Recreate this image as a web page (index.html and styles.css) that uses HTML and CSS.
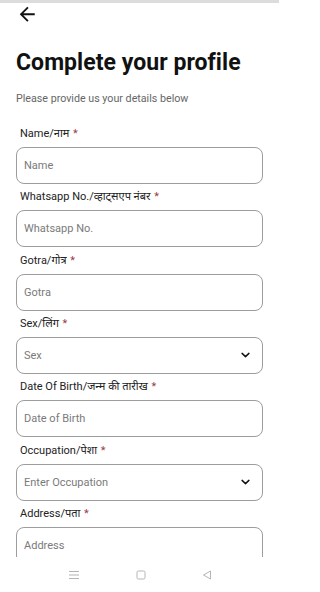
FILE: index.html
```html
<!DOCTYPE html>
<html lang="en">
<head>
<meta charset="utf-8">
<meta name="viewport" content="width=279">
<title>Complete your profile</title>
<link rel="stylesheet" href="styles.css">
</head>
<body>
<div class="statusbar"></div>
<header class="topbar">
  <svg class="back" viewBox="0 0 24 24" width="22.5" height="22.5" aria-hidden="true"><path d="M20 11H7.83l5.59-5.59L12 4l-8 8 8 8 1.41-1.41L7.83 13H20v-2z" fill="#111"/></svg>
</header>
<main class="content">
  <h1 class="title">Complete your profile</h1>
  <p class="subtitle">Please provide us your details below</p>
  <form class="form">
    <div class="field">
      <label class="label">Name/नाम <span class="req">*</span></label>
      <input class="input" type="text" placeholder="Name">
    </div>
    <div class="field">
      <label class="label">Whatsapp No./व्हाट्सएप नंबर <span class="req">*</span></label>
      <input class="input" type="text" placeholder="Whatsapp No.">
    </div>
    <div class="field">
      <label class="label">Gotra/गोत्र <span class="req">*</span></label>
      <input class="input" type="text" placeholder="Gotra">
    </div>
    <div class="field">
      <label class="label">Sex/लिंग <span class="req">*</span></label>
      <div class="input select"><span class="ph">Sex</span>
        <svg class="chev" viewBox="0 0 10 6" width="9" height="6" aria-hidden="true"><polyline points="1.2,1.2 5,4.8 8.8,1.2" fill="none" stroke="#111" stroke-width="1.6" stroke-linecap="round" stroke-linejoin="round"/></svg>
      </div>
    </div>
    <div class="field">
      <label class="label">Date Of Birth/जन्म की तारीख <span class="req">*</span></label>
      <input class="input" type="text" placeholder="Date of Birth">
    </div>
    <div class="field">
      <label class="label">Occupation/पेशा <span class="req">*</span></label>
      <div class="input select"><span class="ph">Enter Occupation</span>
        <svg class="chev" viewBox="0 0 10 6" width="9" height="6" aria-hidden="true"><polyline points="1.2,1.2 5,4.8 8.8,1.2" fill="none" stroke="#111" stroke-width="1.6" stroke-linecap="round" stroke-linejoin="round"/></svg>
      </div>
    </div>
    <div class="field">
      <label class="label">Address/पता <span class="req">*</span></label>
      <textarea class="input area" placeholder="Address"></textarea>
    </div>
  </form>
</main>
<nav class="navbar">
  <svg viewBox="0 0 12 10" width="12" height="10" aria-hidden="true"><path d="M1 1.5h10M1 5h10M1 8.5h10" stroke="#b5b5b5" stroke-width="1" fill="none"/></svg>
  <svg viewBox="0 0 10 10" width="10" height="10" aria-hidden="true"><rect x="1" y="1" width="8" height="8" rx="1.5" stroke="#b5b5b5" stroke-width="1" fill="none"/></svg>
  <svg viewBox="0 0 10 10" width="10" height="10" aria-hidden="true"><path d="M8.5 1L1.5 5l7 4z" stroke="#b5b5b5" stroke-width="1" fill="none" stroke-linejoin="round"/></svg>
</nav>
</body>
</html>
```
FILE: styles.css
```css
* { box-sizing: border-box; }
html, body {
  margin: 0;
  padding: 0;
  background: #fff;
  font-family: Roboto, "Noto Sans", "Noto Sans Devanagari", sans-serif;
  color: #1a1a1a;
}
html { width: 279px; }
body { width: 279px; height: 592px; overflow: hidden; }
.statusbar { height: 3px; background: #dcdcdc; }
.topbar { height: 22px; padding-left: 16px; display: flex; align-items: flex-start; }
.back { display: block; margin-top: 0; }
.content { padding: 0 16px; }
.title {
  margin: 24px 0 0;
  font-size: 23px;
  line-height: 28px;
  font-weight: 700;
  color: #111;
  letter-spacing: 0.05px;
}
.subtitle {
  margin: 15px 0 0;
  font-size: 10.7px;
  line-height: 13px;
  color: #666;
}
.form {
  margin-top: 22px;
  display: flex;
  flex-direction: column;
  gap: 6.33px;
}
.field { display: flex; flex-direction: column; }
.label {
  padding-left: 4px;
  font-size: 11px;
  line-height: 14px;
  color: #222;
  margin-bottom: 6px;
}
.req { color: #9b3b47; margin-left: 1px; }
.input {
  display: block;
  width: 100%;
  height: 37px;
  border: 1px solid #9d9d9d;
  border-radius: 8px;
  padding: 0 10px 0 7px;
  font-family: inherit;
  font-size: 11px;
  color: #222;
  background: #fff;
  outline: none;
}
.input::placeholder { color: #7a7a7a; }
.select {
  display: flex;
  align-items: center;
  justify-content: space-between;
  padding-right: 12px;
}
.ph { color: #7a7a7a; }
.chev { display: block; }
.area {
  height: 60px;
  resize: none;
  padding-top: 11px;
  line-height: 14px;
}
.navbar {
  position: fixed;
  left: 0;
  bottom: 0;
  width: 279px;
  height: 35px;
  background: #fff;
  display: flex;
  align-items: center;
  justify-content: center;
  gap: 56px;
}
```
